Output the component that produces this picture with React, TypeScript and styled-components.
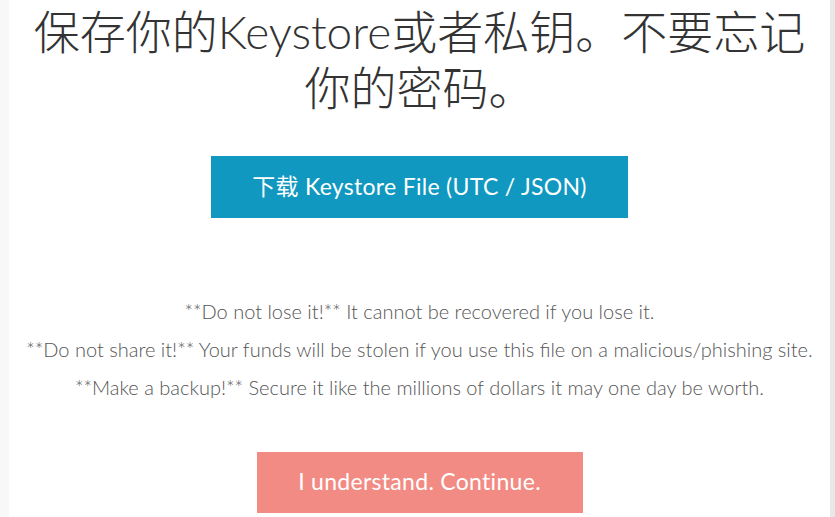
import React from "react";
import styled, { createGlobalStyle } from "styled-components";

const Global = createGlobalStyle`
  html, body { margin: 0; padding: 0; background: #ffffff; }
  body { font-family: Lato, "Noto Sans CJK SC", sans-serif; }
`;

const Page = styled.div`
  display: grid;
  grid-template-columns: 9px 1fr 5px;
  width: 835px;
  height: 517px;
  overflow: hidden;
`;

const SideLeft = styled.div`
  background: #f8f8f8;
`;

const SideRight = styled.div`
  background: #e8e8e8;
`;

const Main = styled.main`
  display: flex;
  flex-direction: column;
  align-items: center;
  background: #ffffff;
  padding-top: 4px;
`;

const Title = styled.h1`
  margin: 0;
  font-family: Lato, "Noto Sans CJK SC", sans-serif;
  font-weight: 300;
  font-size: 46px;
  line-height: 56px;
  color: #333333;
  text-align: center;
  width: 790px;
`;

const Button = styled.button<{ $bg: string; $w: number; $h: number }>`
  display: flex;
  align-items: center;
  justify-content: center;
  width: ${(p) => p.$w}px;
  height: ${(p) => p.$h}px;
  border: none;
  border-radius: 0;
  background: ${(p) => p.$bg};
  color: #ffffff;
  font-family: Lato, "Noto Sans CJK SC", sans-serif;
  font-size: 23px;
  font-weight: 400;
  letter-spacing: 0.3px;
  padding: 0 0 4px 0;
  cursor: pointer;
`;

const DownloadWrap = styled.div`
  margin-top: 40px;
`;

const Notes = styled.div`
  margin-top: 74px;
  display: flex;
  flex-direction: column;
  align-items: center;
`;

const Note = styled.p`
  margin: 0;
  font-family: Lato, sans-serif;
  font-weight: 300;
  font-size: 20px;
  line-height: 38px;
  color: #555555;
  text-align: center;
  white-space: nowrap;
`;

const ContinueWrap = styled.div`
  margin-top: 46px;
`;

export default function App() {
  return (
    <>
      <Global />
      <Page>
        <SideLeft />
        <Main>
          <Title>保存你的Keystore或者私钥。不要忘记你的密码。</Title>
          <DownloadWrap>
            <Button $bg="#1098c1" $w={417} $h={62}>下载 Keystore File (UTC / JSON)</Button>
          </DownloadWrap>
          <Notes>
            <Note>**Do not lose it!** It cannot be recovered if you lose it.</Note>
            <Note>**Do not share it!** Your funds will be stolen if you use this file on a malicious/phishing site.</Note>
            <Note>**Make a backup!** Secure it like the millions of dollars it may one day be worth.</Note>
          </Notes>
          <ContinueWrap>
            <Button $bg="#f28b84" $w={326} $h={61}>I understand. Continue.</Button>
          </ContinueWrap>
        </Main>
        <SideRight />
      </Page>
    </>
  );
}
